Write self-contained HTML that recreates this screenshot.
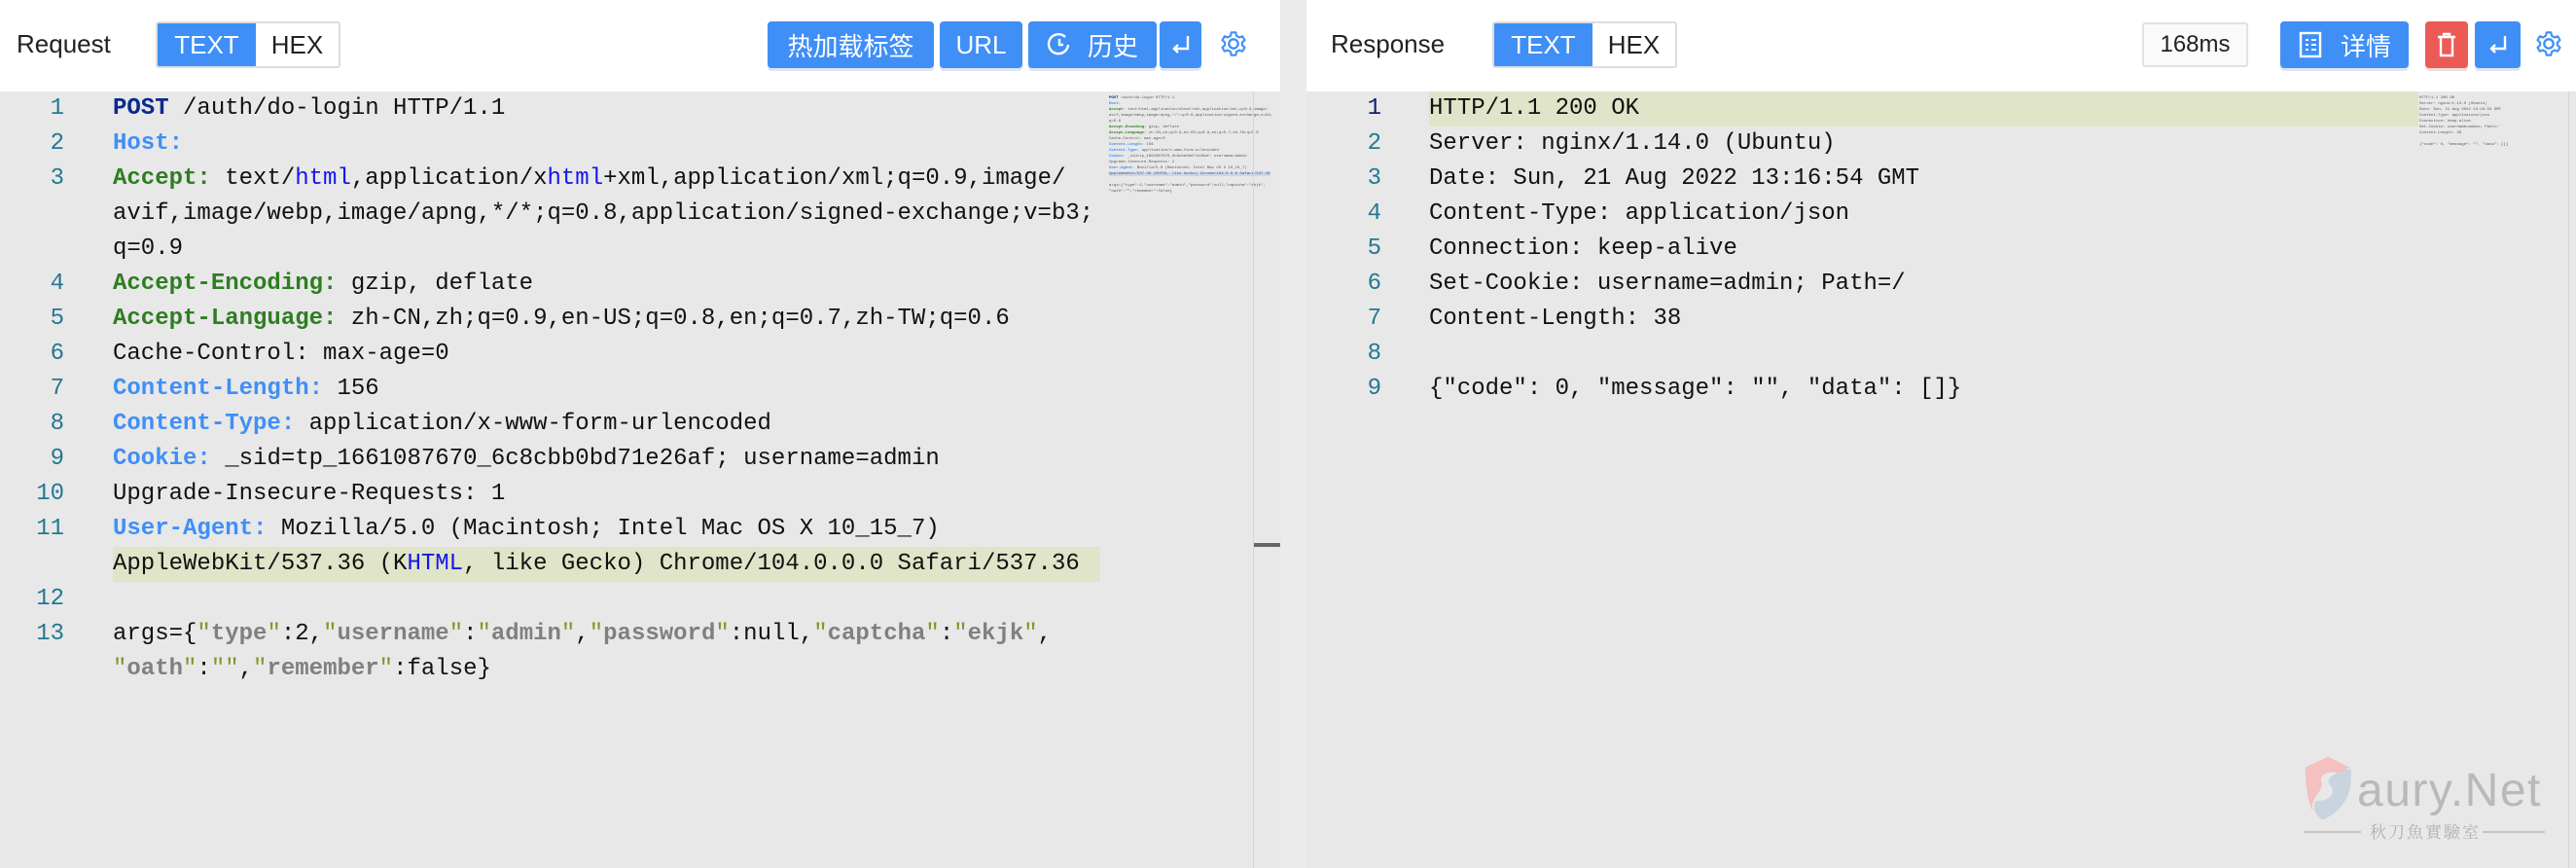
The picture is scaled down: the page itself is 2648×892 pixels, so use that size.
<!DOCTYPE html>
<html><head><meta charset="utf-8"><style>
*{margin:0;padding:0;box-sizing:border-box}
body{width:2648px;height:892px;overflow:hidden;background:#fff;font-family:"Liberation Sans","Noto Sans CJK SC",sans-serif;position:relative}
.abs{position:absolute}
.hdr{font-size:26px;color:#222;top:30px}
.tog{position:absolute;top:22px;height:48px;border:2px solid #ddd;border-radius:3px;display:flex;overflow:hidden;font-size:26px}
.tog div{display:flex;align-items:center;justify-content:center;height:100%}
.tog .on{background:#3f8ff7;color:#fff}
.btn{position:absolute;top:22px;height:48px;background:#3f8ff7;color:#fff;border-radius:4px;font-size:26px;display:flex;align-items:center;justify-content:center;box-shadow:0 3px 0 #dde6f2}
.ed{position:absolute;top:94px;height:798px;background:#e8e8e8;overflow:hidden}
.code{position:absolute;font-family:"Liberation Mono","DejaVu Sans Mono",monospace;font-size:24px;line-height:36px;white-space:pre;color:#111}
.ln{position:absolute;font-family:"Liberation Mono",monospace;font-size:24px;line-height:36px;color:#237893;text-align:right;white-space:pre}
.g{color:#2f7d22;font-weight:bold}.b{color:#3f8ff7;font-weight:bold}.n{color:#0b2a8f;font-weight:bold}.h{color:#1515ee}
.s{color:#7a9a2a}.sk{color:#808080;font-weight:bold}
.mini{position:absolute;font-family:"Liberation Mono",monospace;font-size:4px;line-height:6px;white-space:pre;color:#555}
</style></head><body>
<!-- Request header -->
<div class="abs hdr" style="left:17px">Request</div>
<div class="tog" style="left:160px;width:190px"><div class="on" style="width:102px">TEXT</div><div style="width:86px;color:#222">HEX</div></div>
<div class="btn" style="left:789px;width:171px">热加载标签</div>
<div class="btn" style="left:966px;width:85px">URL</div>
<div class="btn" style="left:1057px;width:132px"><svg width="26" height="26" viewBox="0 0 26 26" style="margin-right:16px"><path d="M19 5A10 10 0 1 0 22 13" fill="none" stroke="#fff" stroke-width="2.4"/><path d="M13 7v6h4" fill="none" stroke="#fff" stroke-width="2.4"/></svg>历史</div>
<div class="btn" style="left:1192px;width:43px"><svg width="24" height="24" viewBox="0 0 24 24"><path d="M19 3v13H5M9 12l-4 4 4 4" fill="none" stroke="#fff" stroke-width="2.4"/></svg></div>
<svg class="abs" style="left:1254px;top:30px" width="28" height="30" viewBox="0 0 24 24"><path d="M12 8a4 4 0 1 0 0.01 0Z" fill="none" stroke="#3f8ff7" stroke-width="2"/><path d="M10 2h4l.6 3 2.4 1.4 2.9-1 2 3.4-2.3 2v2.4l2.3 2-2 3.4-2.9-1L14.6 19 14 22h-4l-.6-3L7 17.6l-2.9 1-2-3.4 2.3-2v-2.4l-2.3-2 2-3.4 2.9 1L9.4 5Z" fill="none" stroke="#3f8ff7" stroke-width="1.8" stroke-linejoin="round"/></svg>

<!-- Divider -->
<div class="abs" style="left:1316px;top:0;width:27px;height:892px;background:#ebebeb"></div>

<!-- Request editor -->
<div class="ed" style="left:0;width:1316px">
<div class="abs" style="left:116px;top:468px;width:1015px;height:36px;background:#e0e4c8"></div>
<div class="ln" style="left:0;top:0;width:66px">1
2
3


4
5
6
7
8
9
10
11

12
13</div>
<div class="code" style="left:116px;top:0"><span class="n">POST</span> /auth/do-login HTTP/1.1
<span class="b">Host:</span>
<span class="g">Accept:</span> text/<span class="h">html</span>,application/x<span class="h">html</span>+xml,application/xml;q=0.9,image/
avif,image/webp,image/apng,*/*;q=0.8,application/signed-exchange;v=b3;
q=0.9
<span class="g">Accept-Encoding:</span> gzip, deflate
<span class="g">Accept-Language:</span> zh-CN,zh;q=0.9,en-US;q=0.8,en;q=0.7,zh-TW;q=0.6
Cache-Control: max-age=0
<span class="b">Content-Length:</span> 156
<span class="b">Content-Type:</span> application/x-www-form-urlencoded
<span class="b">Cookie:</span> _sid=tp_1661087670_6c8cbb0bd71e26af; username=admin
Upgrade-Insecure-Requests: 1
<span class="b">User-Agent:</span> Mozilla/5.0 (Macintosh; Intel Mac OS X 10_15_7)
AppleWebKit/537.36 (K<span class="h">HTML</span>, like Gecko) Chrome/104.0.0.0 Safari/537.36

args={<span class="s">"</span><span class="sk">type</span><span class="s">"</span>:2,<span class="s">"</span><span class="sk">username</span><span class="s">"</span>:<span class="s">"</span><span class="sk">admin</span><span class="s">"</span>,<span class="s">"</span><span class="sk">password</span><span class="s">"</span>:null,<span class="s">"</span><span class="sk">captcha</span><span class="s">"</span>:<span class="s">"</span><span class="sk">ekjk</span><span class="s">"</span>,
<span class="s">"</span><span class="sk">oath</span><span class="s">"</span>:<span class="s">""</span>,<span class="s">"</span><span class="sk">remember</span><span class="s">"</span>:false}</div>
<div class="mini" style="left:1140px;top:4px"><span class="n">POST</span> /auth/do-login HTTP/1.1
<span class="b">Host:</span>
<span class="g">Accept:</span> text/html,application/xhtml+xml,application/xml;q=0.9,image/
avif,image/webp,image/apng,*/*;q=0.8,application/signed-exchange;v=b3;
q=0.9
<span class="g">Accept-Encoding:</span> gzip, deflate
<span class="g">Accept-Language:</span> zh-CN,zh;q=0.9,en-US;q=0.8,en;q=0.7,zh-TW;q=0.6
Cache-Control: max-age=0
<span class="b">Content-Length:</span> 156
<span class="b">Content-Type:</span> application/x-www-form-urlencoded
<span class="b">Cookie:</span> _sid=tp_1661087670_6c8cbb0bd71e26af; username=admin
Upgrade-Insecure-Requests: 1
<span class="b">User-Agent:</span> Mozilla/5.0 (Macintosh; Intel Mac OS X 10_15_7)
<span style="background:#c8d8f0">AppleWebKit/537.36 (KHTML, like Gecko) Chrome/104.0.0.0 Safari/537.36</span>

args={"type":2,"username":"admin","password":null,"captcha":"ekjk",
"oath":"","remember":false}</div>
<div class="abs" style="left:1288px;top:0;width:1px;height:798px;background:#d6d6d6"></div>
<div class="abs" style="left:1289px;top:464px;width:27px;height:4px;background:#666"></div>
</div>

<!-- Response header -->
<div class="abs hdr" style="left:1368px">Response</div>
<div class="tog" style="left:1534px;width:190px"><div class="on" style="width:102px">TEXT</div><div style="width:86px;color:#222">HEX</div></div>
<div class="abs" style="left:2202px;top:23px;width:109px;height:46px;border:2px solid #e2e2e2;border-radius:3px;background:#fafafa;font-size:24px;color:#222;display:flex;align-items:center;justify-content:center">168ms</div>
<div class="btn" style="left:2344px;width:132px"><svg width="26" height="30" viewBox="0 0 26 30" style="margin-right:18px"><rect x="3" y="3" width="20" height="24" fill="none" stroke="#fff" stroke-width="2.4"/><path d="M8 10h3M14 10h5M8 15h3M14 15h5M8 20h3M14 20h5" stroke="#fff" stroke-width="2"/></svg>详情</div>
<div class="btn" style="left:2493px;width:44px;background:#ec5a55;box-shadow:0 3px 0 #f0dede"><svg width="24" height="30" viewBox="0 0 24 30"><path d="M3 7h18M9 7V4h6v3M6 7v19h12V7" fill="none" stroke="#fff" stroke-width="2.4"/></svg></div>
<div class="btn" style="left:2544px;width:47px"><svg width="24" height="24" viewBox="0 0 24 24"><path d="M19 3v13H5M9 12l-4 4 4 4" fill="none" stroke="#fff" stroke-width="2.4"/></svg></div>
<svg class="abs" style="left:2606px;top:30px" width="28" height="30" viewBox="0 0 24 24"><path d="M12 8a4 4 0 1 0 0.01 0Z" fill="none" stroke="#3f8ff7" stroke-width="2"/><path d="M10 2h4l.6 3 2.4 1.4 2.9-1 2 3.4-2.3 2v2.4l2.3 2-2 3.4-2.9-1L14.6 19 14 22h-4l-.6-3L7 17.6l-2.9 1-2-3.4 2.3-2v-2.4l-2.3-2 2-3.4 2.9 1L9.4 5Z" fill="none" stroke="#3f8ff7" stroke-width="1.8" stroke-linejoin="round"/></svg>

<!-- Response editor -->
<div class="ed" style="left:1343px;width:1305px">
<div class="abs" style="left:126px;top:0;width:1017px;height:36px;background:#e0e4c8"></div>
<div class="ln" style="left:0;top:0;width:77px"><span style="color:#0b216f">1</span>
2
3
4
5
6
7
8
9</div>
<div class="code" style="left:126px;top:0">HTTP/1.1 200 OK
Server: nginx/1.14.0 (Ubuntu)
Date: Sun, 21 Aug 2022 13:16:54 GMT
Content-Type: application/json
Connection: keep-alive
Set-Cookie: username=admin; Path=/
Content-Length: 38

{"code": 0, "message": "", "data": []}</div>
<div class="mini" style="left:1144px;top:4px">HTTP/1.1 200 OK
Server: nginx/1.14.0 (Ubuntu)
Date: Sun, 21 Aug 2022 13:16:54 GMT
Content-Type: application/json
Connection: keep-alive
Set-Cookie: username=admin; Path=/
Content-Length: 38

{"code": 0, "message": "", "data": []}</div>
<div class="abs" style="left:1297px;top:0;width:1px;height:798px;background:#d6d6d6"></div>
</div>

<!-- Watermark -->
<svg class="abs" style="left:2368px;top:776px" width="54" height="70" viewBox="0 0 60 74"><path d="M2 12L28 0 52 12 44 20C30 14 18 20 20 28 24 40 8 44 10 62 4 48 2 30 2 12Z" fill="#f4c0c0"/><path d="M54 14C56 40 48 60 22 72 12 66 10 58 14 50 30 52 38 40 30 32 24 24 36 18 54 14Z" fill="#c9d4de"/></svg>
<div class="abs" style="left:2423px;top:789px;font-size:48px;color:#b9b9b9;line-height:48px;letter-spacing:1.5px">aury.Net</div>
<div class="abs" style="left:2369px;top:854px;width:58px;height:2px;background:#c4c4c4"></div>
<div class="abs" style="left:2436px;top:842px;font-size:17px;line-height:24px;color:#b0b0b0;font-family:'Noto Serif CJK SC',serif;letter-spacing:2px">秋刀魚實驗室</div>
<div class="abs" style="left:2552px;top:854px;width:64px;height:2px;background:#c4c4c4"></div>
</body></html>
